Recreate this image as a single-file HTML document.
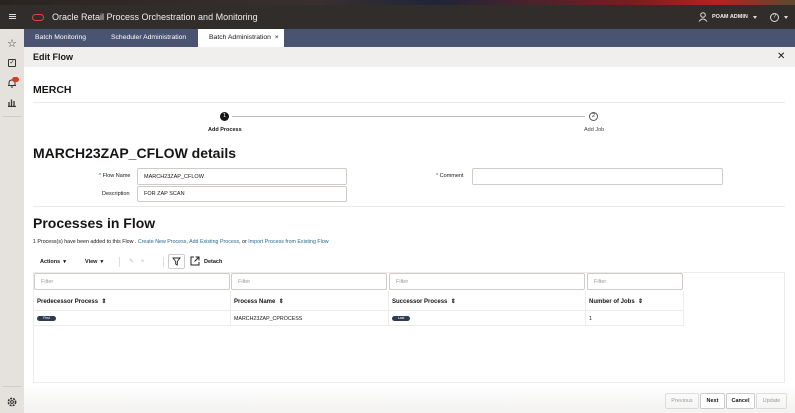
<!DOCTYPE html>
<html><head><meta charset="utf-8"><style>
*{box-sizing:border-box;margin:0;padding:0}
body{width:795px;height:413px;overflow:hidden;font-family:"Liberation Sans",sans-serif;background:#fff;position:relative;color:#161513}
.a{position:absolute}
.t{font-size:6px;color:#161513}
.inp{position:absolute;border:1px solid #cfcbc6;border-radius:2px;background:#fff;font-size:5.5px;padding-left:6px;display:flex;align-items:center}
.lnk{color:#2b6a8f}
.bold{font-weight:bold}
</style></head><body>
<div class="a" style="left:0;top:0;width:795px;height:5px;background:linear-gradient(90deg,#2a2420 0,#3a2f30 40%,#1f2538 55%,#7a1e1e 80%,#b82020 90%,#5a4a30 100%)"></div>
<div class="a" style="left:0;top:5px;width:795px;height:24px;background:#312d2a"></div>
<div class="a" style="left:9px;top:14px;width:7px;height:1.2px;background:#ddd;box-shadow:0 2px 0 #ddd,0 4px 0 #ddd"></div>
<div class="a" style="left:32px;top:14px;width:12px;height:7px;border:1.8px solid #e0463a;border-radius:4px"></div>
<div class="a" style="left:52px;top:12px;font-size:9px;color:#f0eeec">Oracle Retail Process Orchestration and Monitoring</div>
<svg class="a" style="left:698px;top:12px" width="10" height="10"><circle cx="5" cy="3" r="2.3" fill="none" stroke="#ddd" stroke-width="1"/><path d="M1 9.5 Q5 4.5 9 9.5" fill="none" stroke="#ddd" stroke-width="1"/></svg>
<div class="a bold" style="left:712px;top:14px;font-size:5.5px;color:#eee">POAM ADMIN</div>
<div class="a" style="left:753px;top:16px;border:2.3px solid transparent;border-top:3px solid #ddd"></div>
<div class="a" style="left:770px;top:13px;width:9px;height:9px;border:1px solid #ddd;border-radius:50%;font-size:6px;color:#ddd;text-align:center;line-height:7px">?</div>
<div class="a" style="left:784px;top:16px;border:2.3px solid transparent;border-top:3px solid #ddd"></div>
<div class="a" style="left:0;top:29px;width:24px;height:384px;background:#e5e2dd"></div>
<div class="a" style="left:24px;top:29px;width:771px;height:18px;background:#4a5470"></div>
<div class="a" style="left:35px;top:34px;font-size:6.8px;color:#fff">Batch Monitoring</div>
<div class="a" style="left:111px;top:34px;font-size:6.8px;color:#fff">Scheduler Administration</div>
<div class="a" style="left:198px;top:29px;width:86px;height:18px;background:#fff"></div>
<div class="a" style="left:209px;top:34px;font-size:6.8px;color:#161513">Batch Administration &nbsp;×</div>
<div class="a" style="left:7px;top:37px;font-size:11px;color:#333">☆</div>
<div class="a" style="left:8px;top:59px;width:8px;height:8px;border:1px solid #333;border-radius:1px;font-size:6px;line-height:6px;text-align:center">✓</div>
<svg class="a" style="left:7px;top:78px" width="10" height="10"><path d="M2 7.5V5Q2 2 5 2Q8 2 8 5V7.5H9H1ZM4 8.5Q5 10 6 8.5" fill="none" stroke="#333" stroke-width="1"/></svg>
<div class="a" style="left:12px;top:77px;width:7px;height:5px;background:#d63b25;border-radius:3px"></div>
<svg class="a" style="left:7px;top:98px" width="10" height="9"><path d="M1 8.5H9M2 8V4M4.5 8V1.5M7 8V3" stroke="#333" stroke-width="1.3"/></svg>
<div class="a" style="left:3px;top:116px;width:18px;height:1px;background:#ccc"></div>
<div class="a" style="left:3px;top:386px;width:18px;height:1px;background:#ccc"></div>
<svg class="a" style="left:7px;top:397px" width="10" height="10"><circle cx="5" cy="5" r="3.6" fill="none" stroke="#333" stroke-width="1.6" stroke-dasharray="2 1"/><circle cx="5" cy="5" r="1.4" fill="none" stroke="#333" stroke-width="1"/></svg>
<div class="a" style="left:24px;top:47px;width:771px;height:20px;background:#f1efed"></div>
<div class="a bold" style="left:33px;top:52px;font-size:9px">Edit Flow</div>
<div class="a" style="left:777px;top:51px;font-size:10px">✕</div>
<div class="a bold" style="left:33px;top:84px;font-size:10.5px">MERCH</div>
<div class="a" style="left:33px;top:102px;width:752px;height:1px;background:#eceae8"></div>
<div class="a" style="left:220px;top:112px;width:9px;height:9px;background:#161513;border-radius:50%;color:#fff;font-size:5.5px;text-align:center;line-height:9px">1</div>
<div class="a" style="left:232px;top:116px;width:353px;height:1px;background:#bbb"></div>
<div class="a" style="left:589px;top:112px;width:9px;height:9px;border:1px solid #555;border-radius:50%;font-size:5.5px;text-align:center;line-height:7px">2</div>
<div class="a bold" style="left:208px;top:127px;font-size:5.5px">Add Process</div>
<div class="a" style="left:584px;top:127px;font-size:5.5px;color:#444">Add Job</div>
<div class="a bold" style="left:33px;top:145px;font-size:14px">MARCH23ZAP_CFLOW details</div>
<div class="a t" style="left:99px;top:173px;font-size:5.5px"><span class="lnk">*</span> Flow Name</div>
<div class="inp" style="left:137px;top:168px;width:210px;height:17px">MARCH23ZAP_CFLOW</div>
<div class="a t" style="left:102px;top:191px;font-size:5.5px">Description</div>
<div class="inp" style="left:137px;top:186px;width:210px;height:16px">FOR ZAP SCAN</div>
<div class="a t" style="left:436px;top:173px;font-size:5.5px"><span class="lnk">*</span> Comment</div>
<div class="inp" style="left:472px;top:168px;width:251px;height:17px"></div>
<div class="a" style="left:33px;top:206px;width:752px;height:1px;background:#eceae8"></div>
<div class="a bold" style="left:33px;top:215px;font-size:14px">Processes in Flow</div>
<div class="a t" style="left:33px;top:239px;font-size:5.3px">1 Process(s) have been added to this Flow . <span class="lnk">Create New Process</span>, <span class="lnk">Add Existing Process</span>, or <span class="lnk">Import Process from Existing Flow</span></div>
<div class="a t bold" style="left:40px;top:259px;font-size:5.5px">Actions &nbsp;▾</div>
<div class="a t bold" style="left:85px;top:259px;font-size:5.5px">View &nbsp;▾</div>
<div class="a" style="left:119px;top:257px;width:1px;height:10px;background:#ddd"></div>
<div class="a" style="left:129px;top:258px;font-size:6px;color:#bbb">✎ &nbsp;&nbsp;&nbsp;×</div>
<div class="a" style="left:163px;top:257px;width:1px;height:10px;background:#ddd"></div>
<div class="a" style="left:168px;top:254px;width:17px;height:15px;border:1px solid #ccc;border-radius:2px"></div>
<svg class="a" style="left:172px;top:257px" width="9" height="9"><path d="M1 1H8L5.3 4.5V8L3.7 7V4.5Z" fill="none" stroke="#222" stroke-width="0.9"/></svg>
<svg class="a" style="left:190px;top:256px" width="10" height="10"><path d="M4 1H1V9H9V6M5.5 1H9V4.5M9 1L4.5 5.5" fill="none" stroke="#222" stroke-width="1"/></svg>
<div class="a t bold" style="left:204px;top:259px;font-size:5.5px">Detach</div>
<div class="a" style="left:33px;top:272px;width:752px;height:111px;border:1px solid #eeeceb"></div>
<div class="inp" style="left:34px;top:273px;width:196px;height:17px;color:#999">Filter</div>
<div class="inp" style="left:231px;top:273px;width:156px;height:17px;color:#999">Filter</div>
<div class="inp" style="left:389px;top:273px;width:196px;height:17px;color:#999">Filter</div>
<div class="inp" style="left:587px;top:273px;width:96px;height:17px;color:#999">Filter</div>
<div class="a" style="left:34px;top:291px;width:650px;height:34px;border-right:1px solid #eeeceb"></div>
<div class="a" style="left:34px;top:310px;width:650px;height:1px;background:#eeeceb"></div>
<div class="a" style="left:34px;top:325px;width:650px;height:1px;background:#eeeceb"></div>
<div class="a" style="left:230px;top:291px;width:1px;height:34px;background:#eeeceb"></div>
<div class="a" style="left:388px;top:291px;width:1px;height:34px;background:#eeeceb"></div>
<div class="a" style="left:585px;top:291px;width:1px;height:34px;background:#eeeceb"></div>
<div class="a t bold" style="left:37px;top:298px;font-size:6px">Predecessor Process &nbsp;⇕</div>
<div class="a t bold" style="left:234px;top:298px;font-size:6px">Process Name &nbsp;⇕</div>
<div class="a t bold" style="left:392px;top:298px;font-size:6px">Successor Process &nbsp;⇕</div>
<div class="a t bold" style="left:589px;top:298px;font-size:6px">Number of Jobs &nbsp;⇕</div>
<div class="a" style="left:37px;top:316px;width:19px;height:5px;background:#2f3b4f;border-radius:3px;color:#fff;font-size:3.5px;text-align:center;line-height:5px">First</div>
<div class="a t" style="left:234px;top:316px;font-size:5.3px">MARCH23ZAP_CPROCESS</div>
<div class="a" style="left:392px;top:316px;width:18px;height:5px;background:#2f3b4f;border-radius:3px;color:#fff;font-size:3.5px;text-align:center;line-height:5px">Last</div>
<div class="a t" style="left:589px;top:316px;font-size:5.3px">1</div>
<div class="a" style="left:24px;top:385px;width:771px;height:28px;background:linear-gradient(#fff,#f3f2f1)"></div>
<div class="a" style="left:665px;top:393px;width:34px;height:16px;border:1px solid #ddd;border-radius:2px;font-size:5.5px;color:#999;text-align:center;line-height:14px">Previous</div>
<div class="a bold" style="left:700px;top:393px;width:25px;height:16px;border:1px solid #ccc;border-radius:2px;font-size:5.5px;text-align:center;line-height:14px;background:#fff">Next</div>
<div class="a bold" style="left:726px;top:393px;width:29px;height:16px;border:1px solid #ccc;border-radius:2px;font-size:5.5px;text-align:center;line-height:14px;background:#fff">Cancel</div>
<div class="a" style="left:756px;top:393px;width:31px;height:16px;border:1px solid #ddd;border-radius:2px;font-size:5.5px;color:#999;text-align:center;line-height:14px">Update</div>
</body></html>
